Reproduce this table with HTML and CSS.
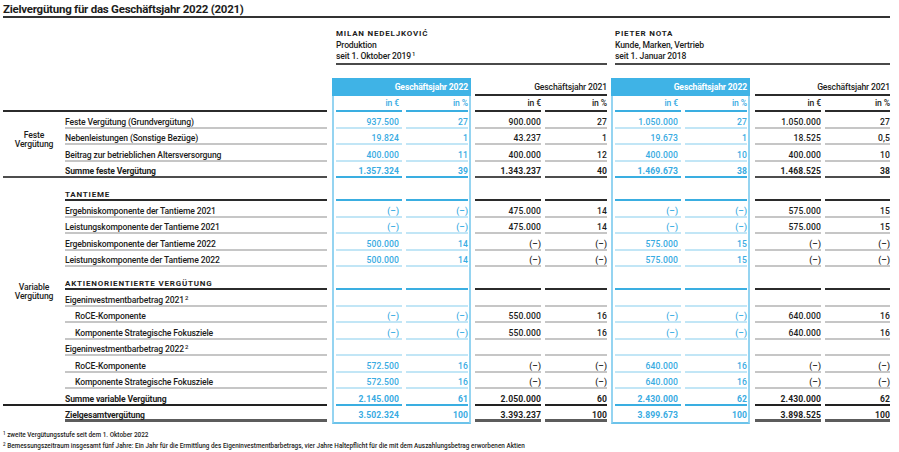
FILE: index.html
```html
<!DOCTYPE html>
<html lang="de">
<head>
<meta charset="utf-8">
<title>Zielvergütung</title>
<link rel="stylesheet" href="styles.css">
</head>
<body>
<div class="page">
  <h1 class="title">Zielvergütung für das Geschäftsjahr 2022 (2021)</h1>
  <div class="table">
    <div class="left">
      <div class="left-head"></div>
      <div class="left-body">
        <div class="lab fx">Feste<br>Vergütung</div>
        <div class="d">Feste Vergütung (Grundvergütung)</div>
        <div class="d">Nebenleistungen (Sonstige Bezüge)</div>
        <div class="d">Beitrag zur betrieblichen Altersversorgung</div>
        <div class="d f">Summe feste Vergütung</div>
        <div class="lab vr">Variable<br>Vergütung</div>
        <div class="d hd">TANTIEME</div>
        <div class="d">Ergebniskomponente der Tantieme 2021</div>
        <div class="d">Leistungskomponente der Tantieme 2021</div>
        <div class="d">Ergebniskomponente der Tantieme 2022</div>
        <div class="d">Leistungskomponente der Tantieme 2022</div>
        <div class="d hd">AKTIENORIENTIERTE VERGÜTUNG</div>
        <div class="d">Eigeninvestmentbarbetrag 2021<sup class="sup">2</sup></div>
        <div class="d ind">RoCE-Komponente</div>
        <div class="d ind">Komponente Strategische Fokusziele</div>
        <div class="d">Eigeninvestmentbarbetrag 2022<sup class="sup">2</sup></div>
        <div class="d ind">RoCE-Komponente</div>
        <div class="d ind">Komponente Strategische Fokusziele</div>
        <div class="d v">Summe variable Vergütung</div>
        <div class="d t">Zielgesamtvergütung</div>
      </div>
    </div>

    <div class="person">
      <div class="name">
        <div class="nm">MILAN NEDELJKOVIĆ</div>
        <div>Produktion</div>
        <div>seit 1. Oktober 2019<sup class="sup">1</sup></div>
      </div>
      <div class="cols">
        <div class="box">
          <div class="bhead">Geschäftsjahr 2022</div>
          <div class="grid blue">
            <div class="c e u">in €</div><div class="c u">in %</div>
            <div class="c e">937.500</div><div class="c">27</div>
            <div class="c e">19.824</div><div class="c">1</div>
            <div class="c e">400.000</div><div class="c">11</div>
            <div class="c e s f b">1.357.324</div><div class="c s f b">39</div>
            <div class="c e s"></div><div class="c s"></div>
            <div class="c e">(–)</div><div class="c">(–)</div>
            <div class="c e">(–)</div><div class="c">(–)</div>
            <div class="c e">500.000</div><div class="c">14</div>
            <div class="c e">500.000</div><div class="c">14</div>
            <div class="c e s"></div><div class="c s"></div>
            <div class="c e"></div><div class="c"></div>
            <div class="c e">(–)</div><div class="c">(–)</div>
            <div class="c e">(–)</div><div class="c">(–)</div>
            <div class="c e"></div><div class="c"></div>
            <div class="c e">572.500</div><div class="c">16</div>
            <div class="c e">572.500</div><div class="c">16</div>
            <div class="c e s v b">2.145.000</div><div class="c s v b">61</div>
            <div class="c e t b">3.502.324</div><div class="c t b">100</div>
          </div>
        </div>
        <div class="plain">
          <div class="phead">Geschäftsjahr 2021</div>
          <div class="grid dark">
            <div class="c e u">in €</div><div class="c u">in %</div>
            <div class="c e">900.000</div><div class="c">27</div>
            <div class="c e">43.237</div><div class="c">1</div>
            <div class="c e">400.000</div><div class="c">12</div>
            <div class="c e s f b">1.343.237</div><div class="c s f b">40</div>
            <div class="c e s"></div><div class="c s"></div>
            <div class="c e">475.000</div><div class="c">14</div>
            <div class="c e">475.000</div><div class="c">14</div>
            <div class="c e">(–)</div><div class="c">(–)</div>
            <div class="c e">(–)</div><div class="c">(–)</div>
            <div class="c e s"></div><div class="c s"></div>
            <div class="c e"></div><div class="c"></div>
            <div class="c e">550.000</div><div class="c">16</div>
            <div class="c e">550.000</div><div class="c">16</div>
            <div class="c e"></div><div class="c"></div>
            <div class="c e">(–)</div><div class="c">(–)</div>
            <div class="c e">(–)</div><div class="c">(–)</div>
            <div class="c e s v b">2.050.000</div><div class="c s v b">60</div>
            <div class="c e t b">3.393.237</div><div class="c t b">100</div>
          </div>
        </div>
      </div>
    </div>

    <div class="person wide">
      <div class="name">
        <div class="nm">PIETER NOTA</div>
        <div>Kunde, Marken, Vertrieb</div>
        <div>seit 1. Januar 2018</div>
      </div>
      <div class="cols">
        <div class="box">
          <div class="bhead">Geschäftsjahr 2022</div>
          <div class="grid blue">
            <div class="c e u">in €</div><div class="c u">in %</div>
            <div class="c e">1.050.000</div><div class="c">27</div>
            <div class="c e">19.673</div><div class="c">1</div>
            <div class="c e">400.000</div><div class="c">10</div>
            <div class="c e s f b">1.469.673</div><div class="c s f b">38</div>
            <div class="c e s"></div><div class="c s"></div>
            <div class="c e">(–)</div><div class="c">(–)</div>
            <div class="c e">(–)</div><div class="c">(–)</div>
            <div class="c e">575.000</div><div class="c">15</div>
            <div class="c e">575.000</div><div class="c">15</div>
            <div class="c e s"></div><div class="c s"></div>
            <div class="c e"></div><div class="c"></div>
            <div class="c e">(–)</div><div class="c">(–)</div>
            <div class="c e">(–)</div><div class="c">(–)</div>
            <div class="c e"></div><div class="c"></div>
            <div class="c e">640.000</div><div class="c">16</div>
            <div class="c e">640.000</div><div class="c">16</div>
            <div class="c e s v b">2.430.000</div><div class="c s v b">62</div>
            <div class="c e t b">3.899.673</div><div class="c t b">100</div>
          </div>
        </div>
        <div class="plain">
          <div class="phead">Geschäftsjahr 2021</div>
          <div class="grid dark">
            <div class="c e u">in €</div><div class="c u">in %</div>
            <div class="c e">1.050.000</div><div class="c">27</div>
            <div class="c e">18.525</div><div class="c">0,5</div>
            <div class="c e">400.000</div><div class="c">10</div>
            <div class="c e s f b">1.468.525</div><div class="c s f b">38</div>
            <div class="c e s"></div><div class="c s"></div>
            <div class="c e">575.000</div><div class="c">15</div>
            <div class="c e">575.000</div><div class="c">15</div>
            <div class="c e">(–)</div><div class="c">(–)</div>
            <div class="c e">(–)</div><div class="c">(–)</div>
            <div class="c e s"></div><div class="c s"></div>
            <div class="c e"></div><div class="c"></div>
            <div class="c e">640.000</div><div class="c">16</div>
            <div class="c e">640.000</div><div class="c">16</div>
            <div class="c e"></div><div class="c"></div>
            <div class="c e">(–)</div><div class="c">(–)</div>
            <div class="c e">(–)</div><div class="c">(–)</div>
            <div class="c e s v b">2.430.000</div><div class="c s v b">62</div>
            <div class="c e t b">3.898.525</div><div class="c t b">100</div>
          </div>
        </div>
      </div>
    </div>
  </div>

  <div class="notes">
    <div><sup class="nsup">1</sup> zweite Vergütungsstufe seit dem 1. Oktober 2022</div>
    <div><sup class="nsup">2</sup> Bemessungszeitraum insgesamt fünf Jahre: Ein Jahr für die Ermittlung des Eigeninvestmentbarbetrags, vier Jahre Haltepflicht für die mit dem Auszahlungsbetrag erworbenen Aktien</div>
  </div>
</div>
</body>
</html>
```

FILE: styles.css
```css
* { box-sizing: border-box; }

body {
  margin: 0;
  background: #fff;
  color: #1d1d1b;
  font-family: Roboto, "Liberation Sans", sans-serif;
  font-size: 8.6px;
  font-weight: 500;
  letter-spacing: -0.14px;
}

.page {
  padding: 0 9px 0 3px;
}

.title {
  margin: 0;
  height: 18px;
  padding-top: 1.5px;
  font-size: 11.5px;
  line-height: 15px;
  font-weight: 700;
  letter-spacing: -0.25px;
  border-bottom: 2px solid #333;
}

.table {
  display: flex;
  align-items: flex-start;
}

/* left description block */
.left {
  flex: none;
  width: 324px;
  margin-right: 5px;
}

.left-head {
  height: 94px;
  border-bottom: 2px solid #2b2b2b;
}

.left-body {
  display: grid;
  grid-template-columns: 62px 262px;
  grid-template-rows: repeat(4, 16.5px) 23px repeat(4, 16.5px) 23px repeat(8, 16.5px);
}

.lab {
  grid-column: 1;
  display: flex;
  flex-direction: column;
  justify-content: center;
  align-items: center;
  text-align: center;
  line-height: 9.5px;
}

.lab.fx {
  grid-row: span 4;
  padding-bottom: 8px;
  border-bottom: 2px solid #4d4d4d;
}

.lab.vr {
  grid-row: span 13;
  padding-top: 3px;
  border-bottom: 2px solid #222;
}

.d {
  grid-column: 2;
  padding-top: 4.5px;
  line-height: 10.5px;
  white-space: nowrap;
  border-bottom: 2px solid #c6c6c6;
}

.d.hd {
  padding-top: 12px;
  font-size: 8px;
  line-height: 10px;
  font-weight: 700;
  letter-spacing: 0.8px;
  border-bottom-color: #2b2b2b;
}

.d.f { font-weight: 700; border-bottom-color: #4d4d4d; }
.d.v { font-weight: 700; border-bottom-color: #222; }
.d.t { font-weight: 700; border-bottom: 3px solid #5c5c5c; }
.d.ind { padding-left: 10px; }

.sup {
  font-size: 6px;
  line-height: 0;
  vertical-align: 3px;
  margin-left: 1px;
}

/* person columns */
.person {
  flex: none;
  width: 275px;
  margin-right: 4px;
}

.person.wide {
  flex: 1;
  width: auto;
  margin-right: 0;
}

.name {
  margin: 0 0 13.5px 4px;
  padding-top: 10px;
  line-height: 11.5px;
  border-bottom: 2px solid #4a4a4a;
}

.nm {
  font-size: 8px;
  font-weight: 700;
  letter-spacing: 0.8px;
}

.cols {
  display: flex;
  gap: 4px;
}

.wide .cols { gap: 5px; }

.box {
  flex: none;
  width: 139px;
  border: 2px solid #95d4f1;
  border-top: 0;
  border-bottom-color: #6cc3ea;
}

.bhead {
  margin: 0 -2px;
  height: 18px;
  padding: 1px 3px 0 0;
  background: #3fb3e6;
  color: #fff;
  font-weight: 700;
  line-height: 17px;
  text-align: right;
}

.box .grid { padding: 0 1px 0 2px; }

.plain { flex: 1; }

.phead {
  height: 18px;
  padding-top: 2.5px;
  line-height: 13.5px;
  text-align: right;
  border-bottom: 2px solid #2b2b2b;
}

.grid {
  display: grid;
  grid-template-columns: 66px 62px;
  column-gap: 4px;
  grid-template-rows: 16px repeat(4, 16.5px) 23px repeat(4, 16.5px) 23px repeat(8, 16.5px);
}

.plain .grid { grid-template-columns: 66px 1fr; }

.blue { --lt: #c2e6f6; --st: #3aaee1; color: #38abe2; }
.dark { --lt: #c6c6c6; --st: #2b2b2b; color: #1d1d1b; }

.c {
  padding-top: 4.5px;
  line-height: 10.5px;
  text-align: right;
  white-space: nowrap;
  letter-spacing: 0.1px;
  border-bottom: 2px solid var(--lt);
}

.blue .e { padding-right: 3px; }

.c.u {
  padding-top: 0;
  line-height: 14px;
  letter-spacing: -0.12px;
  border-bottom-color: var(--st);
}

.c.s { border-bottom-color: var(--st); }
.c.b { font-weight: 700; }
.dark .c.f { border-bottom-color: #4d4d4d; }
.dark .c.v { border-bottom-color: #222; }
.blue .c.t { border-bottom: 0; }
.dark .c.t { border-bottom: 3px solid #5c5c5c; }

/* footnotes */
.notes {
  margin-top: 6px;
  font-size: 6.4px;
  line-height: 10.7px;
  letter-spacing: 0;
}

.nsup {
  font-size: 4.5px;
  line-height: 0;
  vertical-align: 2px;
}
```
